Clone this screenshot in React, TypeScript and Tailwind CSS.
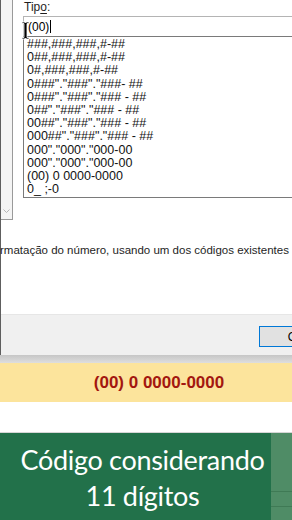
import React from "react";

const formats = [
  "###,###,###,#-##",
  "0##,###,###,#-##",
  "0#,###,###,#-##",
  '0###"."###"."###- ##',
  '0###"."###"."### - ##',
  '0##"."###"."### - ##',
  '00##"."###"."### - ##',
  '000##"."###"."### - ##',
  '000"."000"."000-00',
  '000"."000"."000-00',
  "(00) 0 0000-0000",
  "0_ ;-0",
];

const IBeam = () => (
  <svg
    className="absolute left-[8px] top-[21px]"
    width="9"
    height="19"
    viewBox="0 0 9 19"
  >
    <path
      d="M1 1h2.5l1 1 1-1H8v1.5H6v14h2V18H5.5l-1-1-1 1H1v-1.5h2v-14H1z"
      fill="#000"
      stroke="#fff"
      strokeWidth="0.8"
    />
  </svg>
);

export default function App() {
  return (
    <div className="w-[292px] h-[520px] overflow-hidden bg-white flex flex-col font-['Liberation_Sans',Arial,sans-serif]">
      {/* Dialog */}
      <div className="h-[355px] shrink-0 flex flex-col border-l border-[#5e5e5e]">
        <div className="flex items-start h-[220px] shrink-0">
          {/* scroll remnant of the category list */}
          <div className="w-[12px] h-[220px] shrink-0 border-r border-b border-[#9a9a9a] bg-[#f4f4f4] flex flex-col justify-end items-center pb-[5px]">
            <svg width="7" height="5" viewBox="0 0 7 5">
              <path d="M0.5 0.5 3.5 3.5 6.5 0.5" fill="none" stroke="#b5b5b5" strokeWidth="1" />
            </svg>
          </div>
          <div className="relative flex-1 pl-[10px] flex flex-col">
            <div className="h-[16px] text-[12px] leading-[14px] text-[#1e1e1e] pl-[1px]">
              Tip<span className="underline underline-offset-2">o</span>:
            </div>
            <div className="h-[20px] border-t border-l border-[#b4b4b4] flex items-center pl-[4px] text-[12px] text-black w-[400px]">
              <span>(00)</span>
              <span className="ml-[1px] w-px h-[13px] bg-black" />
            </div>
            <div className="border border-[#7a7a7a] w-[400px] pl-[3px] pt-[1px] pb-[1px]">
              {formats.map((f, i) => (
                <div key={i} className="text-[12.5px] leading-[13.2px] text-[#111] whitespace-pre">
                  {f}
                </div>
              ))}
            </div>
            <IBeam />
          </div>
        </div>
        <div className="mt-[23px] text-[11.5px] leading-[14px] text-[#1e1e1e] whitespace-nowrap -ml-[1px]">
          rmatação do número, usando um dos códigos existentes
        </div>
        <div className="mt-auto h-[41px] bg-[#f0f0f0] border-t border-[#e6e6e6] flex pl-[258px] pt-[11px]">
          <div className="w-[75px] h-[21px] shrink-0 border border-[#0078d7] bg-[#e1e1e1] flex items-center justify-center text-[12px] text-black">
            OK
          </div>
        </div>
      </div>

      {/* shadow band */}
      <div className="h-[8px] shrink-0 bg-gradient-to-b from-[#c6c6c6] to-[#dedede]" />

      {/* yellow cell */}
      <div className="h-[39px] shrink-0 bg-[#fce49c] flex items-center justify-center pl-[26px]">
        <span className="text-[17px] font-bold text-[#a3170f]">(00) 0 0000-0000</span>
      </div>

      <div className="h-[31px] shrink-0 bg-white border-b border-[#d6d6d6]" />

      {/* caption */}
      <div className="flex-1 flex">
        <div className="w-[271px] shrink-0 bg-[#22714a] pt-[9px] text-center text-white text-[27px] leading-[36px] font-['Lato',sans-serif] tracking-[-0.3px] pl-[14px]">
          <div>Código considerando</div>
          <div>11 dígitos</div>
        </div>
        <div className="flex-1 bg-[#4f8c66] flex flex-col pt-[58px]">
          <div className="h-px bg-[#3f7a55]" />
          <div className="h-[14px]" />
          <div className="h-px bg-[#3f7a55]" />
        </div>
      </div>
    </div>
  );
}
